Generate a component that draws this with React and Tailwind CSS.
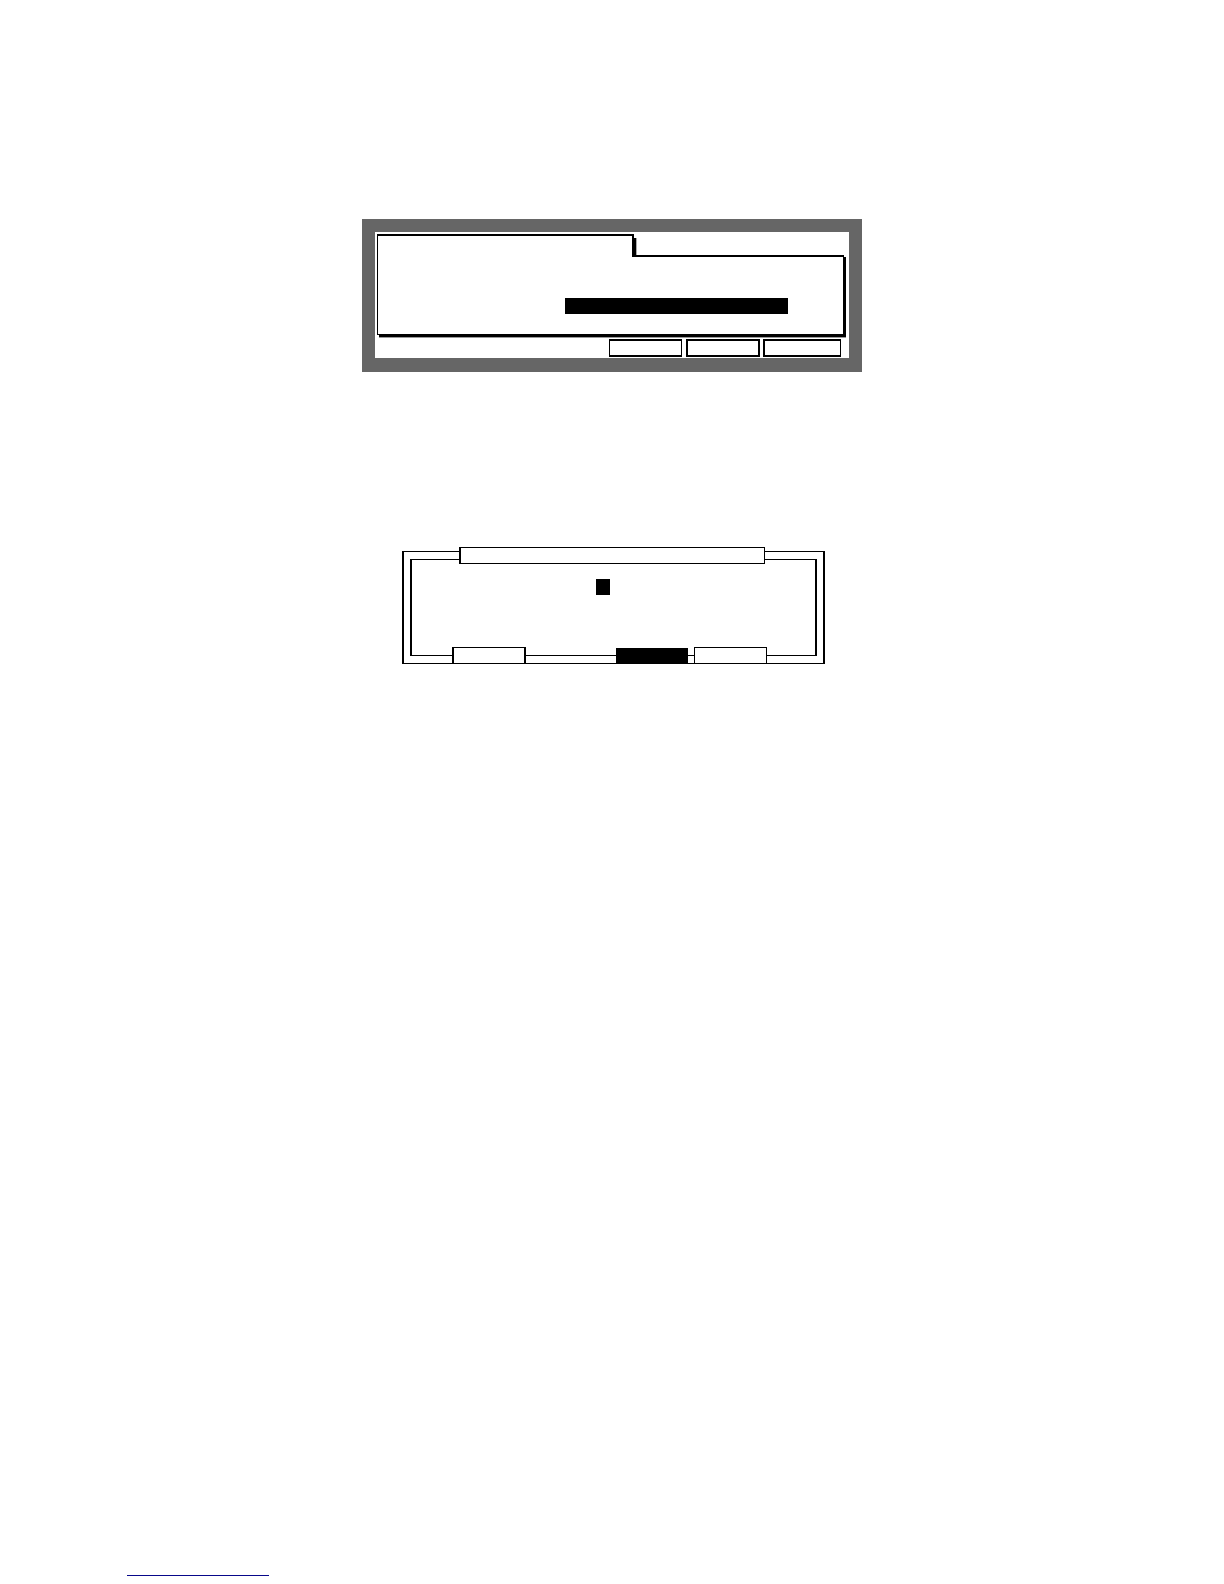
function FolderPanel() {
  return (
    <section
      aria-label="Folder panel"
      className="mx-auto w-full max-w-[500px] border-x-[13px] border-t-[13px] border-b-[14px] border-[#666666] bg-white pt-[2px] pr-[5px] pb-px pl-[2px]"
    >
      <div className="relative flex items-start">
        <div className="h-[23px] w-[257px] border-t-2 border-r-2 border-l border-black bg-white" />
        <div className="mt-1 h-[19px] w-[2px] bg-black" />
        <div className="mt-1 h-[17px] w-px bg-[#aaaaaa]" />
      </div>
      <div className="-mt-[2px] flex justify-end border border-t-2 border-black pt-[41px] pr-[55px] pb-[20px] shadow-[2px_2px_0_#000,2px_3px_0_#999]">
        <input
          type="text"
          aria-label="Value"
          className="h-4 w-[223px] bg-black text-xs text-white outline-none"
        />
      </div>
      <div className="mt-1 flex justify-end pr-[3px]">
        <button type="button" aria-label="Option 1" className="mr-1 h-[18px] w-[73px] border-x border-y-2 border-black bg-white" />
        <button type="button" aria-label="Option 2" className="mr-[3px] h-[18px] w-[74px] border-2 border-black bg-white" />
        <button type="button" aria-label="Option 3" className="h-[18px] w-[78px] border-2 border-r border-black bg-white" />
      </div>
    </section>
  );
}

function FramedDialog() {
  return (
    <section aria-label="Dialog" className="mt-[179px] pl-[3px]">
      <div className="mx-auto w-full max-w-[423px] border-x-2 border-y border-black px-[6px] py-[7px]">
        <div className="flex flex-col border-x-2 border-y border-black">
          <div className="relative -mt-[13px] mr-[50px] ml-[47px] h-[17px] border border-l-2 border-black bg-white" />
          <input
            type="text"
            aria-label="Character"
            className="mt-[15px] ml-[184px] h-4 w-[14px] bg-black text-xs text-white outline-none"
          />
          <div className="relative mt-[52px] -mb-[9px] flex items-end pr-[48px] pl-[40px]">
            <button type="button" aria-label="Left action" className="h-[17px] w-[74px] border-x-2 border-y border-black bg-white" />
            <button type="button" aria-label="Selected action" className="mr-[6px] ml-auto h-4 w-[72px] bg-black" />
            <button type="button" aria-label="Right action" className="h-[17px] w-[73px] border border-black bg-white" />
          </div>
        </div>
      </div>
    </section>
  );
}

export default function App() {
  return (
    <main className="flex min-h-screen flex-col bg-white pt-[219px] pb-2 font-['Liberation_Sans']">
      <FolderPanel />
      <FramedDialog />
      <a
        href="#top"
        aria-label="Footer link"
        className="mt-auto ml-[127px] block h-4 w-[142px] border-b border-b-[#08088a]"
      />
    </main>
  );
}
